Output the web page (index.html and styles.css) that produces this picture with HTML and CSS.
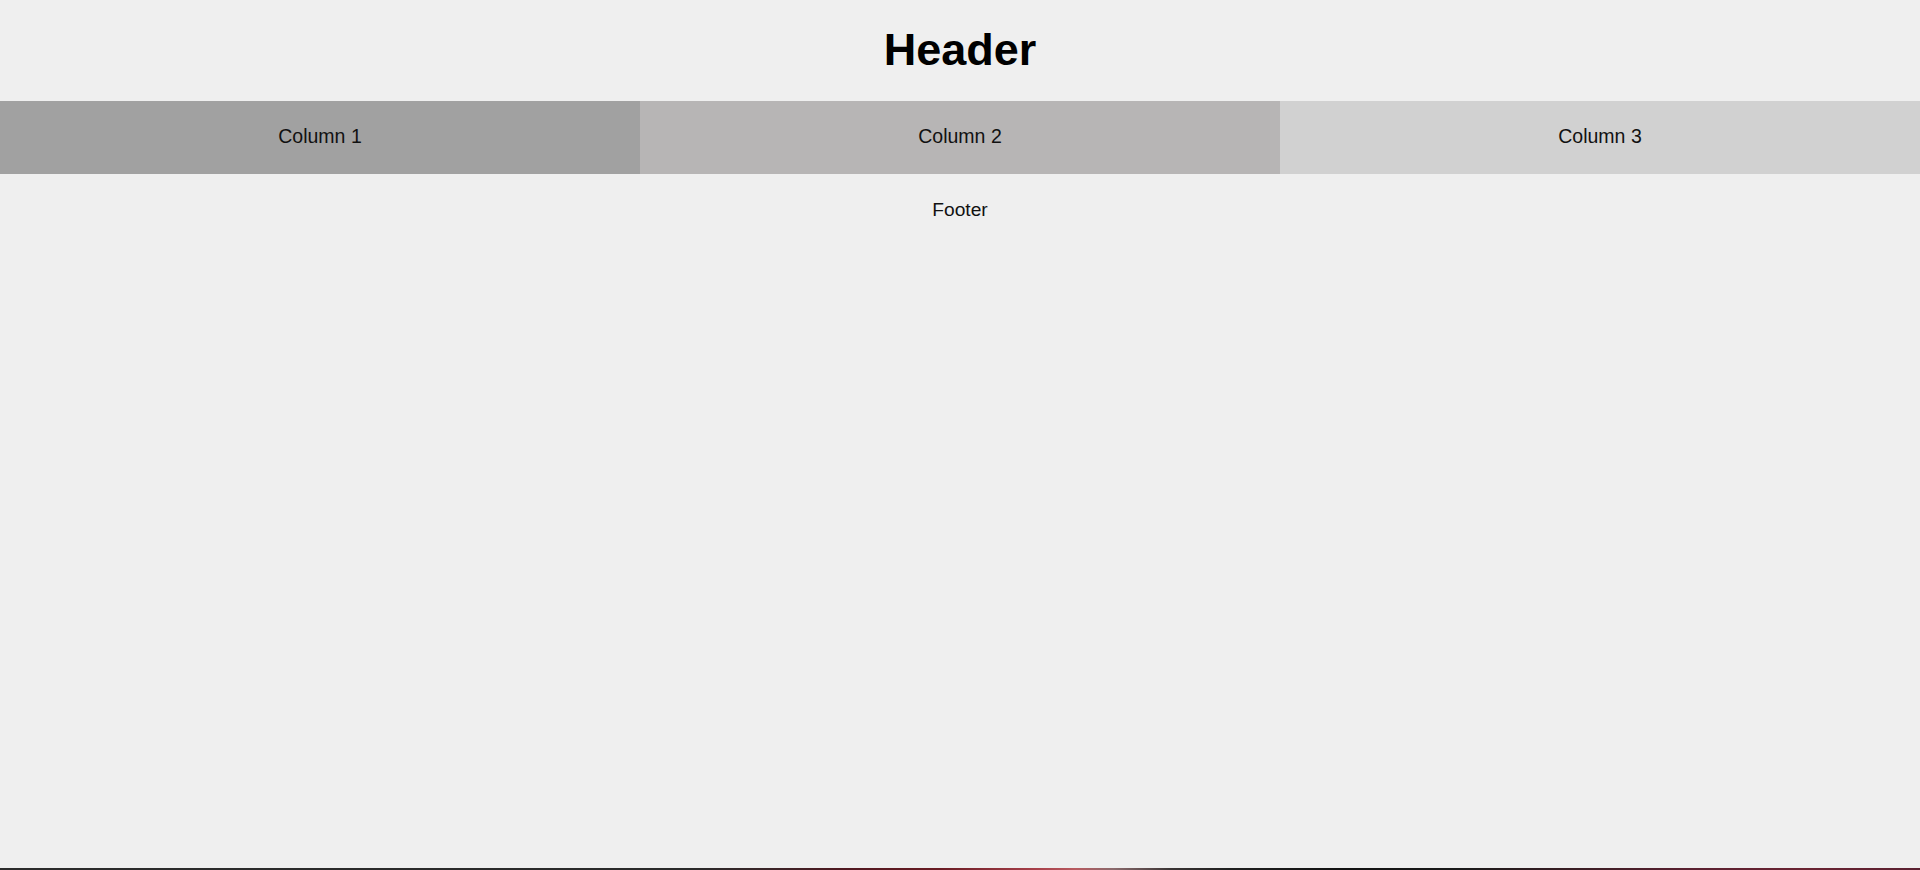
FILE: index.html
```html
<!DOCTYPE html>
<html lang="en">
<head>
<meta charset="utf-8">
<title>Layout</title>
<link rel="stylesheet" href="styles.css">
</head>
<body>
<div class="page">
  <header class="header"><h1 class="title">Header</h1></header>
  <div class="columns">
    <div class="col col-1">Column 1</div>
    <div class="col col-2">Column 2</div>
    <div class="col col-3">Column 3</div>
  </div>
  <footer class="footer">Footer</footer>
  <div class="spacer"></div>
  <div class="edge"></div>
</div>
</body>
</html>
```
FILE: styles.css
```css
html, body {
  margin: 0;
  padding: 0;
}
body {
  background: #efefef;
  font-family: "Liberation Sans", Arial, sans-serif;
  color: #000;
}
.page {
  min-height: 100vh;
  display: flex;
  flex-direction: column;
}
.header {
  padding: 24px 0 26px;
  text-align: center;
}
.title {
  margin: 0;
  font-size: 45px;
  line-height: 51px;
  font-weight: bold;
}
.columns {
  display: grid;
  grid-template-columns: 1fr 1fr 1fr;
}
.col {
  padding: 24px 0 26px;
  text-align: center;
  font-size: 19.5px;
  line-height: 23px;
  color: #111;
}
.col-1 { background: #a1a1a1; }
.col-2 { background: #b7b5b5; }
.col-3 { background: #d1d1d1; }
.footer {
  padding: 25px 0;
  text-align: center;
  font-size: 19.2px;
  line-height: 22px;
  color: #111;
}
.spacer {
  flex: 1;
}
.edge {
  height: 2px;
  background: linear-gradient(to right,
    #2b2b2b 0%,
    #2a2a2a 36%,
    #3a2528 40%,
    #501820 44%,
    #6a1c24 49%,
    #a8404a 54%,
    #b85a60 56%,
    #8a6a6c 58%,
    #3a3434 61%,
    #202020 64%,
    #121212 70%,
    #1a1a1a 76%,
    #3a1e24 82%,
    #5a2030 88%,
    #6a2432 94%,
    #5a2030 100%);
}
```
